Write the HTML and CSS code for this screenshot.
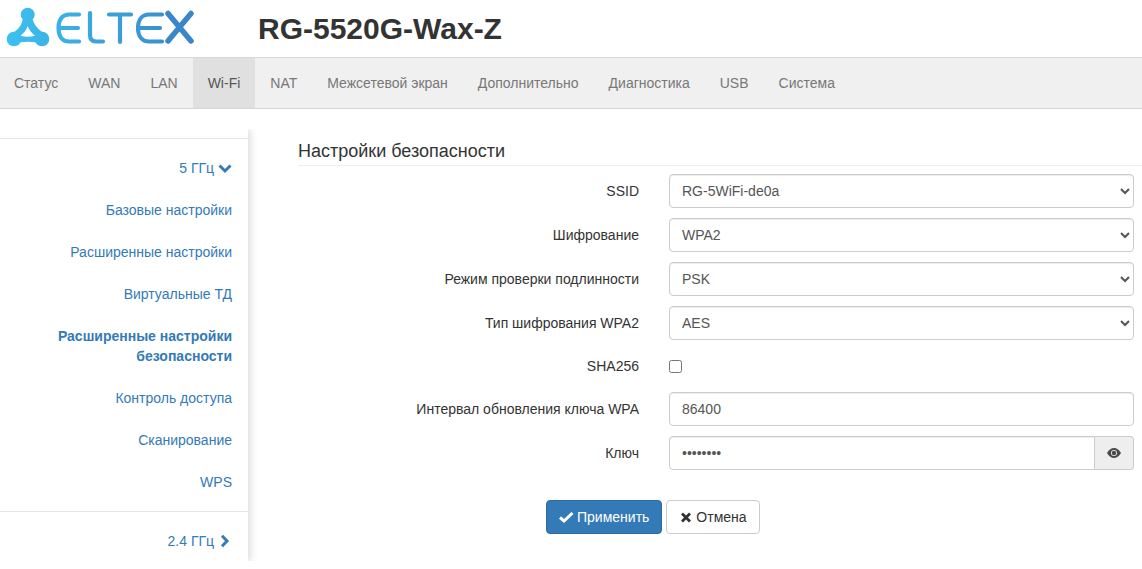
FILE: index.html
```html
<!DOCTYPE html>
<html lang="ru">
<head>
<meta charset="utf-8">
<title>RG-5520G-Wax-Z</title>
<link rel="stylesheet" href="styles.css">
</head>
<body>
<header class="top">
  <svg class="logo" width="200" height="50" viewBox="0 0 200 50" aria-label="ELTEX">
    <defs>
      <linearGradient id="lg" gradientUnits="userSpaceOnUse" x1="0" y1="0" x2="196" y2="0">
        <stop offset="0" stop-color="#3cc3f2"/>
        <stop offset="1" stop-color="#3a86c8"/>
      </linearGradient>
    </defs>
    <g fill="url(#lg)">
      <circle cx="27.7" cy="14.8" r="7"/>
      <circle cx="14" cy="39" r="7.3"/>
      <circle cx="42" cy="39" r="7.3"/>
      <path d="M22.500 20 C21.500 26 17 31 11 33.500 L15 44 C22 41 34 41 41 44 L45.500 33.500 C39.500 31 34.500 26 33 20 Z M27.700 26 C26.500 30 23.500 33.500 20.500 35.800 C25 37.200 30.500 37.200 35 35.800 C32 33.500 29 30 27.700 26 Z" fill-rule="evenodd"/>
    </g>
    <g fill="none" stroke="url(#lg)" stroke-width="4.200" stroke-linecap="round" stroke-linejoin="round">
      <path d="M79 14.500 H69 C62 14.500 58.500 20 58.500 28 C58.500 36 62 41.500 69 41.500 H79 M60 28 H78"/>
      <path d="M90 13 V35 C90 39.500 92 41.500 96 41.500 H103"/>
      <path d="M109 14.500 H131 M120 14.500 V42"/>
      <path d="M162 14.500 H149 C142 14.500 138 20 138 28 C138 36 142 41.500 149 41.500 H162 M139.500 28 H160"/>
    </g>
    <path d="M168 13.500 L191 41 M191 13.500 L168 41" fill="none" stroke="#3a86c8" stroke-width="5.500" stroke-linecap="round"/>
  </svg>
  <h1 class="title">RG-5520G-Wax-Z</h1>
</header>
<nav class="menu">
  <a class="menu-item">Статус</a>
  <a class="menu-item">WAN</a>
  <a class="menu-item">LAN</a>
  <a class="menu-item active">Wi-Fi</a>
  <a class="menu-item">NAT</a>
  <a class="menu-item">Межсетевой экран</a>
  <a class="menu-item">Дополнительно</a>
  <a class="menu-item">Диагностика</a>
  <a class="menu-item">USB</a>
  <a class="menu-item">Система</a>
</nav>
<div class="page">
  <aside class="side">
    <div class="side-group">
      <a class="side-link">5 ГГц
        <svg class="chev" width="14" height="14" viewBox="0 0 14 14"><path d="M1.500 4.500 L7 10 L12.500 4.500" fill="none" stroke="#337ab7" stroke-width="3"/></svg>
      </a>
      <a class="side-link">Базовые настройки</a>
      <a class="side-link">Расширенные настройки</a>
      <a class="side-link">Виртуальные ТД</a>
      <a class="side-link current">Расширенные настройки безопасности</a>
      <a class="side-link">Контроль доступа</a>
      <a class="side-link">Сканирование</a>
      <a class="side-link">WPS</a>
    </div>
    <div class="side-group last">
      <a class="side-link">2.4 ГГц
        <svg class="chev" width="14" height="14" viewBox="0 0 14 14"><path d="M4 1.800 L9 7 L4 12.200" fill="none" stroke="#337ab7" stroke-width="3"/></svg>
      </a>
    </div>
  </aside>
  <main class="content">
    <h2 class="heading">Настройки безопасности</h2>
    <form class="form">
      <div class="row"><label class="lbl">SSID</label><div class="ctl"><select class="field pick"><option>RG-5WiFi-de0a</option></select></div></div>
      <div class="row"><label class="lbl">Шифрование</label><div class="ctl"><select class="field pick"><option>WPA2</option></select></div></div>
      <div class="row"><label class="lbl">Режим проверки подлинности</label><div class="ctl"><select class="field pick"><option>PSK</option></select></div></div>
      <div class="row"><label class="lbl">Тип шифрования WPA2</label><div class="ctl"><select class="field pick"><option>AES</option></select></div></div>
      <div class="row short"><label class="lbl">SHA256</label><div class="ctl"><input class="check" type="checkbox"></div></div>
      <div class="row"><label class="lbl">Интервал обновления ключа WPA</label><div class="ctl"><input class="field" type="text" value="86400"></div></div>
      <div class="row"><label class="lbl">Ключ</label><div class="ctl group">
        <input class="field joined" type="password" value="12345678">
        <span class="addon"><svg width="14" height="14" viewBox="0 0 14 14"><path d="M0 7 C2 3.400 4.400 2 7 2 C9.600 2 12 3.400 14 7 C12 10.600 9.600 12 7 12 C4.400 12 2 10.600 0 7 Z M7 4 A3 3 0 1 0 7 10 A3 3 0 1 0 7 4 Z" fill="#4a4a4a" fill-rule="evenodd"/><circle cx="7" cy="7" r="2.200" fill="#4a4a4a"/></svg></span>
      </div></div>
      <div class="actions">
        <button class="btn primary" type="button"><svg width="15" height="14" viewBox="0 0 15 14"><path d="M1 7.500 L5 11 L13.500 3" fill="none" stroke="#fff" stroke-width="3"/></svg>Применить</button>
        <button class="btn plain" type="button"><svg width="14" height="14" viewBox="0 0 14 14"><path d="M3 3.500 L11 11.500 M11 3.500 L3 11.500" fill="none" stroke="#333" stroke-width="2.800"/></svg>Отмена</button>
      </div>
    </form>
  </main>
</div>
</body>
</html>
```

FILE: styles.css
```css
* { box-sizing: border-box; }
html, body { margin: 0; }
body {
  font-family: "Liberation Sans", Arial, sans-serif;
  font-size: 14px;
  line-height: 20px;
  color: #333;
  background: #fff;
  overflow: hidden;
  height: 569px;
}
.top {
  height: 57px;
  display: flex;
  align-items: flex-start;
}
.logo { display: block; flex: none; }
.title {
  margin: 12px 0 0 58px;
  font-size: 30px;
  line-height: 33px;
  font-weight: 700;
  color: #333;
}
.menu {
  height: 52px;
  display: flex;
  background: #f0f0f0;
  border-top: 1px solid #d8d8d8;
  border-bottom: 1px solid #d8d8d8;
}
.menu-item {
  padding: 15px;
  color: #777;
}
.menu-item:first-child { padding-left: 14px; }
.active { background: #e0e0e0; color: #555; }
.page { display: flex; align-items: flex-start; }
.side {
  width: 248px;
  flex: none;
  margin-top: 20px;
  padding-top: 9px;
  background: #fff;
  box-shadow: 3px 0 7px rgba(0,0,0,.13);
  clip-path: inset(0 -12px 0 0);
  height: 432px;
}
.side-group { border-top: 1px solid #e4e4e4; border-bottom: 1px solid #e4e4e4; padding: 8px 0; }
.side-group.last { border: 0; padding-top: 8px; }
.side-link {
  display: block;
  padding: 11px 16px 11px 40px;
  text-align: right;
  color: #337ab7;
}
.current { font-weight: 700; }
.chev { vertical-align: -2px; }
.content { flex: 1; min-width: 0; padding-left: 50px; margin-top: 1px; }
.heading {
  margin: 31px 0 8px;
  padding-bottom: 4px;
  font-size: 18px;
  line-height: 20px;
  font-weight: 500;
  color: #333;
  border-bottom: 1px solid #eee;
}
.row { display: flex; align-items: center; height: 34px; margin-bottom: 10px; }
.row.short { height: 32px; }
.lbl { width: 341px; flex: none; text-align: right; }
.ctl { margin-left: 30px; width: 465px; flex: none; }
.field {
  display: block;
  width: 100%;
  height: 34px;
  padding: 6px 12px;
  font: inherit;
  color: #555;
  background: #fff;
  border: 1px solid #ccc;
  border-radius: 4px;
  box-shadow: inset 0 1px 1px rgba(0,0,0,.075);
}
.pick { padding-left: 8px; }
.check { display: block; width: 13px; height: 13px; margin: 0; }
.group { display: flex; }
.joined { flex: 1; min-width: 0; border-radius: 4px 0 0 4px; }
.addon {
  width: 39px;
  flex: none;
  display: flex;
  align-items: center;
  justify-content: center;
  background: #eee;
  border: 1px solid #ccc;
  border-left: 0;
  border-radius: 0 4px 4px 0;
}
.actions {
  display: flex;
  justify-content: flex-start;
  gap: 4px;
  margin: 30px 0 0 248px;
}
.btn {
  display: inline-flex;
  align-items: center;
  height: 34px;
  padding: 6px 12px;
  font: inherit;
  border: 1px solid transparent;
  border-radius: 4px;
  gap: 3px;
}
.primary { background: #337ab7; border-color: #2e6da4; color: #fff; }
.plain { background: #fff; border-color: #ccc; color: #333; }
```
